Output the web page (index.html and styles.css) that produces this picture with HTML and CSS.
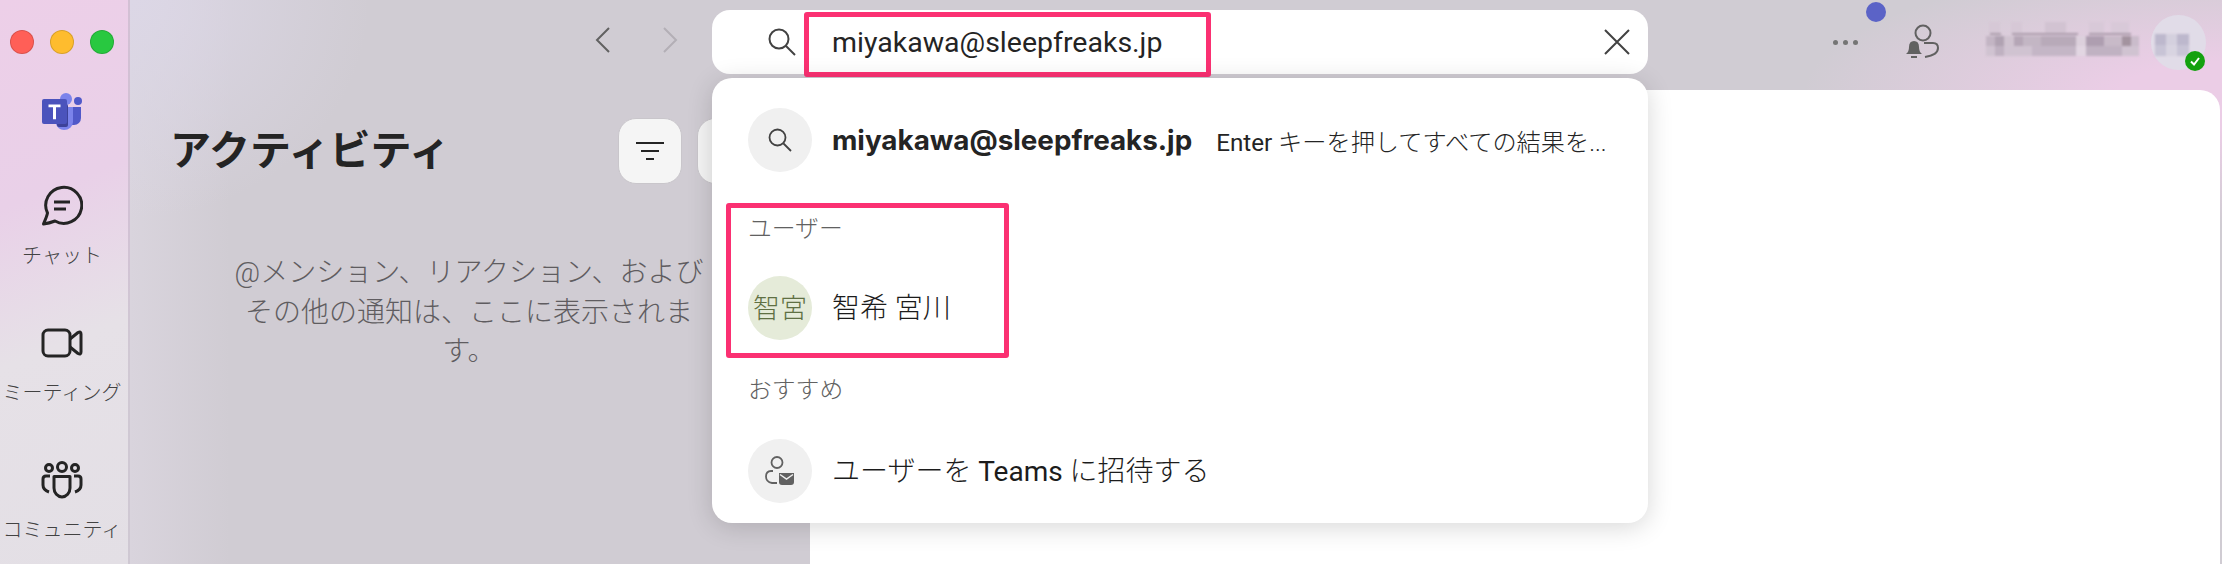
FILE: index.html
```html
<!DOCTYPE html>
<html lang="ja">
<head>
    <meta charset="UTF-8">
    <title>アクティビティ | Microsoft Teams</title>
    <link rel="stylesheet" href="styles.css">
</head>
<body>

    <div class="app">
        <div class="rail">
            <div class="traffic">
                <span class="light red"></span>
                <span class="light yellow"></span>
                <span class="light green"></span>
            </div>

            <svg class="logo" width="40" height="38" viewBox="0 0 40 38">
                <circle cx="36" cy="9" r="4" fill="#5059c9"/>
                <path d="M27 15h12v11a7 7 0 0 1-7 7h-5z" fill="#5059c9"/>
                <circle cx="24" cy="7" r="6" fill="#7b83eb"/>
                <path d="M14 15h17v15a9 8 0 0 1-9 8 9 8 0 0 1-8-6z" fill="#7b83eb"/>
                <rect x="15" y="12" width="11" height="23" rx="2" fill="#3d4299"/>
                <rect x="0" y="7" width="25" height="25" rx="2" fill="#4b53bc"/>
                <path d="M6.500 12.500h12v2.800h-4.500v12h-3v-12h-4.500z" fill="#fff"/>
            </svg>

            <a class="rail-item">
                <span class="rail-icon">
                    <svg width="42" height="42" viewBox="0 0 42 42" fill="none" stroke="#242424" stroke-width="3">
                        <path d="M6.500 28A18 18 0 1 1 14 36C10 37.500 6 38.500 2.500 39C4 35.500 6 31 6.500 28Z" stroke-linejoin="round"/>
                        <path d="M13 17H29M13 24H25"/>
                    </svg>
                </span>
                <span class="rail-label">チャット</span>
            </a>

            <a class="rail-item">
                <span class="rail-icon">
                    <svg width="42" height="30" viewBox="0 0 42 30" fill="none" stroke="#242424" stroke-width="3">
                        <rect x="2" y="2" width="27" height="26" rx="5"/>
                        <path d="M29 11L37 4.500Q40 3 40 6V24Q40 27 37 25.500L29 19" stroke-linejoin="round"/>
                    </svg>
                </span>
                <span class="rail-label">ミーティング</span>
            </a>

            <a class="rail-item">
                <span class="rail-icon">
                    <svg width="42" height="38" viewBox="0 0 42 38" fill="none" stroke="#242424" stroke-width="3">
                        <circle cx="8" cy="7" r="3.500"/>
                        <circle cx="21" cy="6" r="4.500"/>
                        <circle cx="34" cy="7" r="3.500"/>
                        <path d="M13 15.500H29V27A8 9 0 0 1 13 27Z" stroke-linejoin="round"/>
                        <path d="M9 15H5Q2 15 2 18V24Q2 29 8 31M33 15H37Q40 15 40 18V24Q40 29 34 31"/>
                    </svg>
                </span>
                <span class="rail-label">コミュニティ</span>
            </a>
        </div>

        <div class="content">
            <div class="topbar">
                <div class="nav">
                    <svg width="16" height="26" viewBox="0 0 16 26" fill="none" stroke="#616161" stroke-width="2"><path d="M14 1L2 13L14 25"/></svg>
                    <svg width="16" height="26" viewBox="0 0 16 26" fill="none" stroke="#b3afb6" stroke-width="2"><path d="M2 1L14 13L2 25"/></svg>
                </div>

                <div class="search-wrap">
                    <div class="search">
                        <svg class="search-icon" width="28" height="28" viewBox="0 0 28 28" fill="none" stroke="#424242" stroke-width="2">
                            <circle cx="11" cy="11" r="9.500"/>
                            <path d="M18 18L27 27"/>
                        </svg>
                        <span class="search-text">miyakawa@sleepfreaks.jp</span>
                        <svg width="26" height="26" viewBox="0 0 26 26" fill="none" stroke="#424242" stroke-width="2"><path d="M1 1L25 25M25 1L1 25"/></svg>
                    </div>
                    <div class="mark mark-search"></div>

                    <div class="dropdown">
                        <div class="row">
                            <span class="circle">
                                <svg width="24" height="24" viewBox="0 0 24 24" fill="none" stroke="#424242" stroke-width="1.800">
                                    <circle cx="9.500" cy="9.500" r="8"/>
                                    <path d="M15.500 15.500L23 23"/>
                                </svg>
                            </span>
                            <b class="row-strong">miyakawa@sleepfreaks.jp</b>
                            <span class="row-hint"><span class="latin">Enter</span> キーを押してすべての結果を...</span>
                        </div>

                        <div class="section-label first">ユーザー</div>
                        <div class="row">
                            <span class="circle avatar-green">智宮</span>
                            <span class="row-text">智希 宮川</span>
                        </div>

                        <div class="section-label second">おすすめ</div>
                        <div class="row">
                            <span class="circle">
                                <svg width="30" height="30" viewBox="0 0 30 30" fill="none" stroke="#616161" stroke-width="1.800">
                                    <circle cx="12" cy="6.500" r="5.500"/>
                                    <path d="M8 15H6Q1 15 1 20.500Q1 26 7 27H12"/>
                                    <path d="M14 17H29V26Q29 29 26 29H17Q14 29 14 26Z" fill="#616161" stroke="none"/>
                                    <path d="M15 18.500L21.500 23L28 18.500" stroke="#f0f0f0" stroke-width="1.500"/>
                                </svg>
                            </span>
                            <span class="row-text">ユーザーを <span class="latin">Teams</span> に招待する</span>
                        </div>

                        <div class="mark mark-user"></div>
                    </div>
                </div>

                <div class="top-right">
                    <span class="more">
                        <i></i><i></i><i></i>
                    </span>
                    <span class="presence-note">
                        <span class="note-dot"></span>
                        <svg width="34" height="36" viewBox="0 0 34 36" fill="none" stroke="#616161" stroke-width="2">
                            <circle cx="18" cy="9" r="7.500"/>
                            <path d="M19 19H28Q33 19 33 24Q33 31 20 33"/>
                            <path d="M1 30Q4 28 4 23Q4 17 9 17Q14 17 14 23Q14 28 17 30Z" fill="#616161" stroke="none"/>
                            <path d="M6 33H12" stroke-width="2"/>
                        </svg>
                    </span>
                    <div class="blur-name"></div>
                    <div class="me">
                        <div class="blur-avatar"></div>
                        <span class="status">
                            <svg width="12" height="12" viewBox="0 0 12 12" fill="none" stroke="#fff" stroke-width="2"><path d="M2 6.500L5 9.500L10 3"/></svg>
                        </span>
                    </div>
                </div>
            </div>

            <div class="body">
                <div class="activity">
                    <div class="activity-head">
                        <h1>アクティビティ</h1>
                        <button class="tool">
                            <svg width="28" height="20" viewBox="0 0 28 20" fill="none" stroke="#242424" stroke-width="2"><path d="M0 2H28M5 10H23M10 18H18"/></svg>
                        </button>
                        <button class="tool"></button>
                    </div>
                    <p class="empty">@メンション、リアクション、および<br>その他の通知は、ここに表示されま<br>す。</p>
                </div>
                <div class="panel"></div>
            </div>
        </div>
    </div>

</body>
</html>
```

FILE: styles.css
```css
* {
    margin: 0;
    padding: 0;
    box-sizing: border-box;
}

html, body {
    width: 2222px;
    height: 564px;
    overflow: hidden;
}

body {
    font-family: "Roboto", "Noto Sans CJK JP", sans-serif;
    color: #242424;
    background:
        radial-gradient(ellipse 420px 130px at 2222px 95px, #ebcde6 25%, rgba(235, 205, 230, 0) 100%),
        radial-gradient(ellipse 240px 220px at 130px 0, #dcd7e6 0%, rgba(220, 215, 230, 0) 100%),
        linear-gradient(90deg, #d9d4dd 130px, #d0ccd3 230px);
}

.app {
    display: flex;
    height: 564px;
}

/* left rail */
.rail {
    width: 130px;
    flex-shrink: 0;
    padding-right: 4px;
    display: flex;
    flex-direction: column;
    align-items: center;
    border-right: 2px solid rgba(190, 180, 195, 0.55);
    background: linear-gradient(158deg, #edcfe8 0%, #e9d0e8 34%, #e6e1e7 60%, #e3dfe5 100%);
}

.traffic {
    display: flex;
    gap: 16px;
    margin-top: 30px;
}

.light {
    width: 24px;
    height: 24px;
    border-radius: 50%;
    border: 1px solid rgba(0, 0, 0, 0.15);
}

.red { background: #ff5f57; }
.yellow { background: #febc2e; }
.green { background: #28c840; }

.logo {
    flex-shrink: 0;
    margin-top: 38px;
    margin-bottom: 54px;
}

.rail-item {
    height: 137px;
    flex-shrink: 0;
    display: flex;
    flex-direction: column;
    align-items: center;
}

.rail-item:last-child {
    height: auto;
}

.rail-icon {
    height: 44px;
    display: flex;
    align-items: center;
    margin-bottom: 13px;
}

.rail-label {
    font-size: 20px;
    font-weight: 300;
    line-height: 30px;
    color: #424242;
    white-space: nowrap;
}

/* top bar and search */
.content {
    flex: 1;
    display: flex;
    flex-direction: column;
}

.topbar {
    height: 90px;
    flex-shrink: 0;
    display: flex;
    align-items: flex-start;
    padding-left: 465px;
    padding-top: 10px;
}

.nav {
    width: 117px;
    height: 64px;
    display: flex;
    align-items: center;
    gap: 51px;
    padding-bottom: 4px;
}

.search-wrap {
    position: relative;
    width: 936px;
    z-index: 2;
}

.search {
    height: 64px;
    background: #fff;
    border-radius: 18px;
    display: flex;
    align-items: center;
    padding-left: 56px;
    padding-right: 18px;
}

.search-icon {
    margin-right: 36px;
}

.search-text {
    flex: 1;
    font-size: 28.500px;
    color: #242424;
}

.dropdown {
    position: absolute;
    top: 68px;
    left: 0;
    width: 100%;
    height: 445px;
    padding: 30px 36px 20px;
    background: #fff;
    border-radius: 20px;
    box-shadow: 0 4px 26px rgba(0, 0, 0, 0.16);
}

.row {
    display: flex;
    align-items: center;
    height: 64px;
}

.circle {
    width: 64px;
    height: 64px;
    flex-shrink: 0;
    border-radius: 50%;
    background: #f0f0f0;
    display: flex;
    align-items: center;
    justify-content: center;
    margin-right: 20px;
}

.avatar-green {
    background: #e5ebd9;
    color: #5f7043;
    font-size: 27px;
    font-weight: 300;
    padding-bottom: 3px;
}

.row-strong {
    font-family: "Inter", "Noto Sans CJK JP", sans-serif;
    font-size: 27.800px;
    font-weight: 700;
    color: #242424;
    margin-right: 24px;
    white-space: nowrap;
}

.row-hint {
    font-size: 24.200px;
    font-weight: 300;
    color: #242424;
    white-space: nowrap;
}

.row-text {
    font-size: 28px;
    font-weight: 300;
    color: #1c1c1c;
    white-space: nowrap;
    padding-bottom: 4px;
}

.latin {
    font-weight: 400;
}

.section-label {
    font-size: 23.800px;
    font-weight: 300;
    line-height: 30px;
    color: #616161;
}

.section-label.first {
    margin-top: 42px;
    margin-bottom: 32px;
}

.section-label.second {
    margin-top: 35px;
    margin-bottom: 34px;
}

/* pink annotation boxes drawn over the shot */
.mark {
    position: absolute;
    border: 5px solid #fb3072;
    border-radius: 3px;
    pointer-events: none;
}

.mark-search {
    left: 92px;
    top: 2px;
    width: 407px;
    height: 65px;
}

.mark-user {
    left: 14px;
    top: 125px;
    width: 283px;
    height: 155px;
}

/* right side of the top bar */
.top-right {
    flex: 1;
    height: 64px;
    display: flex;
    align-items: center;
    padding-left: 185px;
}

.more {
    display: flex;
    gap: 5px;
    margin-right: 47px;
}

.more i {
    width: 5px;
    height: 5px;
    border-radius: 50%;
    background: #757575;
}

.presence-note {
    position: relative;
    display: flex;
    margin-right: 47px;
}

.note-dot {
    position: absolute;
    left: -39px;
    top: -22px;
    width: 20px;
    height: 20px;
    border-radius: 50%;
    background: #5b63c7;
}

/* pixelated name from the shot, cells are about 9px wide */
.blur-name {
    width: 153px;
    height: 34px;
    margin-right: 12px;
    margin-bottom: 6px;
    filter: blur(1px);
    background:
        linear-gradient(90deg, transparent 3px, #d6c8d6 3px, #d6c8d6 14px, transparent 14px, transparent 25px, #d6c8d6 25px, #d6c8d6 36px, transparent 36px, transparent 59px, #d2c3d2 59px, #d2c3d2 80px, transparent 80px, transparent 103px, #d8c9d8 103px, #d8c9d8 118px, transparent 118px, transparent 125px, #d8c9d8 125px, #d8c9d8 143px, transparent 143px) 0 0 / 100% 11px no-repeat,
        linear-gradient(90deg, transparent 4px, #ab9cab 4px, #ab9cab 15px, transparent 15px, transparent 26px, #ab9cab 26px, #ab9cab 92px, transparent 92px, transparent 103px, #ab9cab 103px, #ab9cab 145px, transparent 145px) 0 11px / 100% 2px no-repeat,
        linear-gradient(90deg, #c3b5c4 0, #c3b5c4 9px, #b0a2b2 9px, #b0a2b2 18px, #d0c3d0 18px, #d0c3d0 28px, #b5a6b6 28px, #b5a6b6 37px, #c3b6c4 37px, #c3b6c4 55px, #b8aab9 55px, #b8aab9 90px, #dcd0dc 90px, #dcd0dc 100px, #ae9eb0 100px, #ae9eb0 118px, #c8bac8 118px, #c8bac8 136px, #a3939f 136px, #a3939f 145px, #cabccb 145px, #cabccb 153px) 0 14px / 100% 10px no-repeat,
        linear-gradient(90deg, #d0c3d1 0, #d0c3d1 9px, #bfb1c1 9px, #bfb1c1 18px, #d0c3d1 18px, #d0c3d1 46px, #c4b6c6 46px, #c4b6c6 90px, #e2d6e2 90px, #e2d6e2 100px, #c0b2c2 100px, #c0b2c2 136px, #d0c3d1 136px, #d0c3d1 153px) 0 24px / 100% 10px no-repeat;
}

.me {
    position: relative;
    width: 55px;
    height: 55px;
    border-radius: 50%;
    background: #e1dce8;
}

.blur-avatar {
    position: absolute;
    left: 4px;
    top: 19px;
    width: 34px;
    height: 22px;
    filter: blur(1px);
    background:
        linear-gradient(90deg, #bdb8cd 0, #bdb8cd 11px, #d4d0de 11px, #d4d0de 22px, #bdb8cd 22px) 0 0 / 100% 11px no-repeat,
        linear-gradient(90deg, #c8c4d6 0, #c8c4d6 11px, #d8d4e1 11px, #d8d4e1 22px, #c8c4d6 22px) 0 11px / 100% 11px no-repeat;
}

.status {
    position: absolute;
    right: 1px;
    bottom: -1px;
    width: 20px;
    height: 20px;
    border-radius: 50%;
    background: #13a10e;
    display: flex;
    align-items: center;
    justify-content: center;
}

/* activity list and main panel */
.body {
    flex: 1;
    display: flex;
}

.activity {
    width: 680px;
    flex-shrink: 0;
    padding-left: 40px;
    overflow: hidden;
}

.activity-head {
    height: 66px;
    margin-top: 28px;
    display: flex;
    align-items: center;
}

.activity-head h1 {
    width: 448px;
    font-size: 41px;
    font-weight: 700;
    color: #242424;
    white-space: nowrap;
    padding-bottom: 8px;
}

.tool {
    width: 64px;
    height: 66px;
    flex-shrink: 0;
    margin-right: 15px;
    background: #f5f5f5;
    border: 1px solid #c9c6cb;
    border-radius: 18px;
    display: flex;
    align-items: center;
    justify-content: center;
}

.empty {
    width: 600px;
    margin-top: 69px;
    margin-left: -1px;
    font-size: 28px;
    font-weight: 300;
    line-height: 39.500px;
    text-align: center;
    color: #5f5c60;
    white-space: nowrap;
}

.panel {
    flex: 1;
    margin-right: 2px;
    background: #fff;
    border-radius: 20px 20px 0 0;
}
```
